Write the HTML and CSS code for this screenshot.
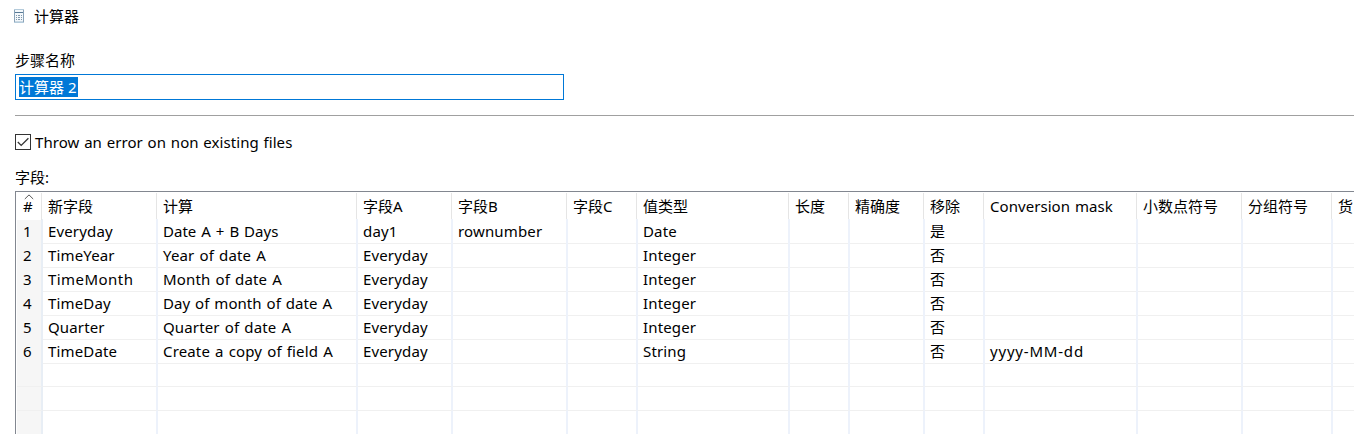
FILE: index.html
```html
<!DOCTYPE html>
<html lang="zh-CN">
<head>
<meta charset="utf-8">
<title>计算器</title>
<link rel="stylesheet" href="styles.css">
</head>
<body>
<main class="dialog">
  <header class="titlebar">
    <svg class="app-icon" width="10" height="14" viewBox="0 0 10 14" shape-rendering="crispEdges">
      <rect width="10" height="14" fill="#f4f8fb"/>
      <path d="M0 0h10v1H0zM0 13h10v1H0z" fill="#b4cbdb"/>
      <path d="M0 1h1v12H0zM9 1h1v12H9z" fill="#8ba3b8"/>
      <path d="M1 3h8v1H1z" fill="#587a96"/>
      <path d="M1 12h8v1H1z" fill="#c9d8e3"/>
      <path d="M2 6h1v1H2zM4 6h2v1H4zM7 6h1v1H7zM2 8h1v1H2zM4 8h2v1H4zM7 8h1v1H7zM2 10h1v1H2zM4 10h2v1H4zM7 10h1v1H7z" fill="#8097ab"/>
    </svg>
    <span>计算器</span>
  </header>
  <div class="label name-label">步骤名称</div>
  <div class="name-input"><span class="selection">计算器 2</span></div>
  <div class="divider"></div>
  <div class="check-row">
    <span class="checkbox"><svg width="14" height="14" viewBox="0 0 14 14"><path d="M1.8 7l3.4 3.4L12.4 3.2" fill="none" stroke="#333" stroke-width="1.3"/></svg></span>
    <span class="check-text">Throw an error on non existing files</span>
  </div>
  <div class="label fields-label">字段:</div>
  <section class="table">
    <div class="row head"><span class="num"><svg class="sort" width="10" height="6" viewBox="0 0 10 6"><path d="M.8 5L5 .9 9.2 5" fill="none" stroke="#555" stroke-width="1"/></svg>#</span><span>新字段</span><span>计算</span><span>字段A</span><span>字段B</span><span>字段C</span><span>值类型</span><span>长度</span><span>精确度</span><span>移除</span><span class="latin">Conversion mask</span><span>小数点符号</span><span>分组符号</span><span>货</span></div>
    <div class="row"><span class="num">1</span><span>Everyday</span><span class="loose">Date A + B Days</span><span>day1</span><span>rownumber</span><span></span><span>Date</span><span></span><span></span><span>是</span><span></span><span></span><span></span><span></span></div>
    <div class="row"><span class="num">2</span><span>TimeYear</span><span>Year of date A</span><span>Everyday</span><span></span><span></span><span>Integer</span><span></span><span></span><span>否</span><span></span><span></span><span></span><span></span></div>
    <div class="row"><span class="num">3</span><span class="wide">TimeMonth</span><span>Month of date A</span><span>Everyday</span><span></span><span></span><span>Integer</span><span></span><span></span><span>否</span><span></span><span></span><span></span><span></span></div>
    <div class="row"><span class="num">4</span><span>TimeDay</span><span class="snug">Day of month of date A</span><span>Everyday</span><span></span><span></span><span>Integer</span><span></span><span></span><span>否</span><span></span><span></span><span></span><span></span></div>
    <div class="row"><span class="num">5</span><span>Quarter</span><span>Quarter of date A</span><span>Everyday</span><span></span><span></span><span>Integer</span><span></span><span></span><span>否</span><span></span><span></span><span></span><span></span></div>
    <div class="row"><span class="num">6</span><span>TimeDate</span><span>Create a copy of field A</span><span>Everyday</span><span></span><span></span><span>String</span><span></span><span></span><span>否</span><span class="mask">yyyy-MM-dd</span><span></span><span></span><span></span></div>
    <div class="row"><span class="num"></span><span></span><span></span><span></span><span></span><span></span><span></span><span></span><span></span><span></span><span></span><span></span><span></span><span></span></div>
    <div class="row"><span class="num"></span><span></span><span></span><span></span><span></span><span></span><span></span><span></span><span></span><span></span><span></span><span></span><span></span><span></span></div>
    <div class="row"><span class="num"></span><span></span><span></span><span></span><span></span><span></span><span></span><span></span><span></span><span></span><span></span><span></span><span></span><span></span></div>
  </section>
</main>
</body>
</html>
```
FILE: styles.css
```css
* { box-sizing: border-box; }
body {
  margin: 0;
  background: #fff;
  color: #000;
  font: 15px/24px "Noto Sans", "Noto Sans CJK SC", sans-serif;
}
.dialog {
  height: 434px;
  padding-left: 15px;
  overflow: hidden;
  display: flex;
  flex-direction: column;
}
.dialog > * { flex: none; }
.titlebar {
  display: flex;
  align-items: flex-start;
  gap: 10px;
  height: 48px;
  padding-top: 4px;
}
.app-icon { margin: 5px 0 0 -1px; }
.label { height: 26px; }
.name-input {
  width: 549px;
  height: 26px;
  padding: 2px 3px;
  border: 1px solid #0078d7;
}
.selection {
  display: block;
  width: 59px;
  height: 20px;
  line-height: 20px;
  background: #0078d7;
  color: #fff;
  white-space: nowrap;
}
.divider {
  height: 1px;
  margin-top: 15px;
  background: #a0a0a0;
}
.check-row {
  display: flex;
  align-items: center;
  gap: 4px;
  height: 24px;
  margin-top: 14px;
}
.checkbox {
  display: flex;
  width: 16px;
  height: 16px;
  border: 1px solid #333;
}
.check-text {
  letter-spacing: .06px;
  word-spacing: .8px;
}
.fields-label { margin-top: 11px; }
.table {
  height: 260px;
  border: solid #828790;
  border-width: 1px 0 0 1px;
  padding: 1px 0 0 1px;
  overflow: hidden;
}
.row {
  display: grid;
  grid-template-columns: 26px 115px 200px 95px 115px 70px 152px 60px 75px 60px 153px 105px 90px 90px;
  height: 24px;
}
.row span {
  padding-left: 5px;
  border-right: 2px solid #edf2fb;
  border-bottom: 1px solid #f0f0f0;
  line-height: 24px;
  letter-spacing: .15px;
  word-spacing: 1px;
  white-space: nowrap;
}
.row .wide { letter-spacing: .45px; }
.row .mask { letter-spacing: .8px; }
.row .snug { letter-spacing: .04px; }
.row .loose { letter-spacing: .03px; }
.row .num {
  padding-left: 6px;
  background: #f6f6f6;
  border-right-color: #e8eef5;
}
.head { height: 26px; }
.row.head span {
  border-bottom: 0;
  border-right: 1px solid #e5e5e5;
  margin-right: 1px;
  line-height: 27px;
  letter-spacing: 0;
}
.row.head .latin { letter-spacing: .05px; }
.row.head .num {
  position: relative;
  background: #fff;
}
.sort {
  position: absolute;
  left: 7px;
  top: 1px;
}
```
